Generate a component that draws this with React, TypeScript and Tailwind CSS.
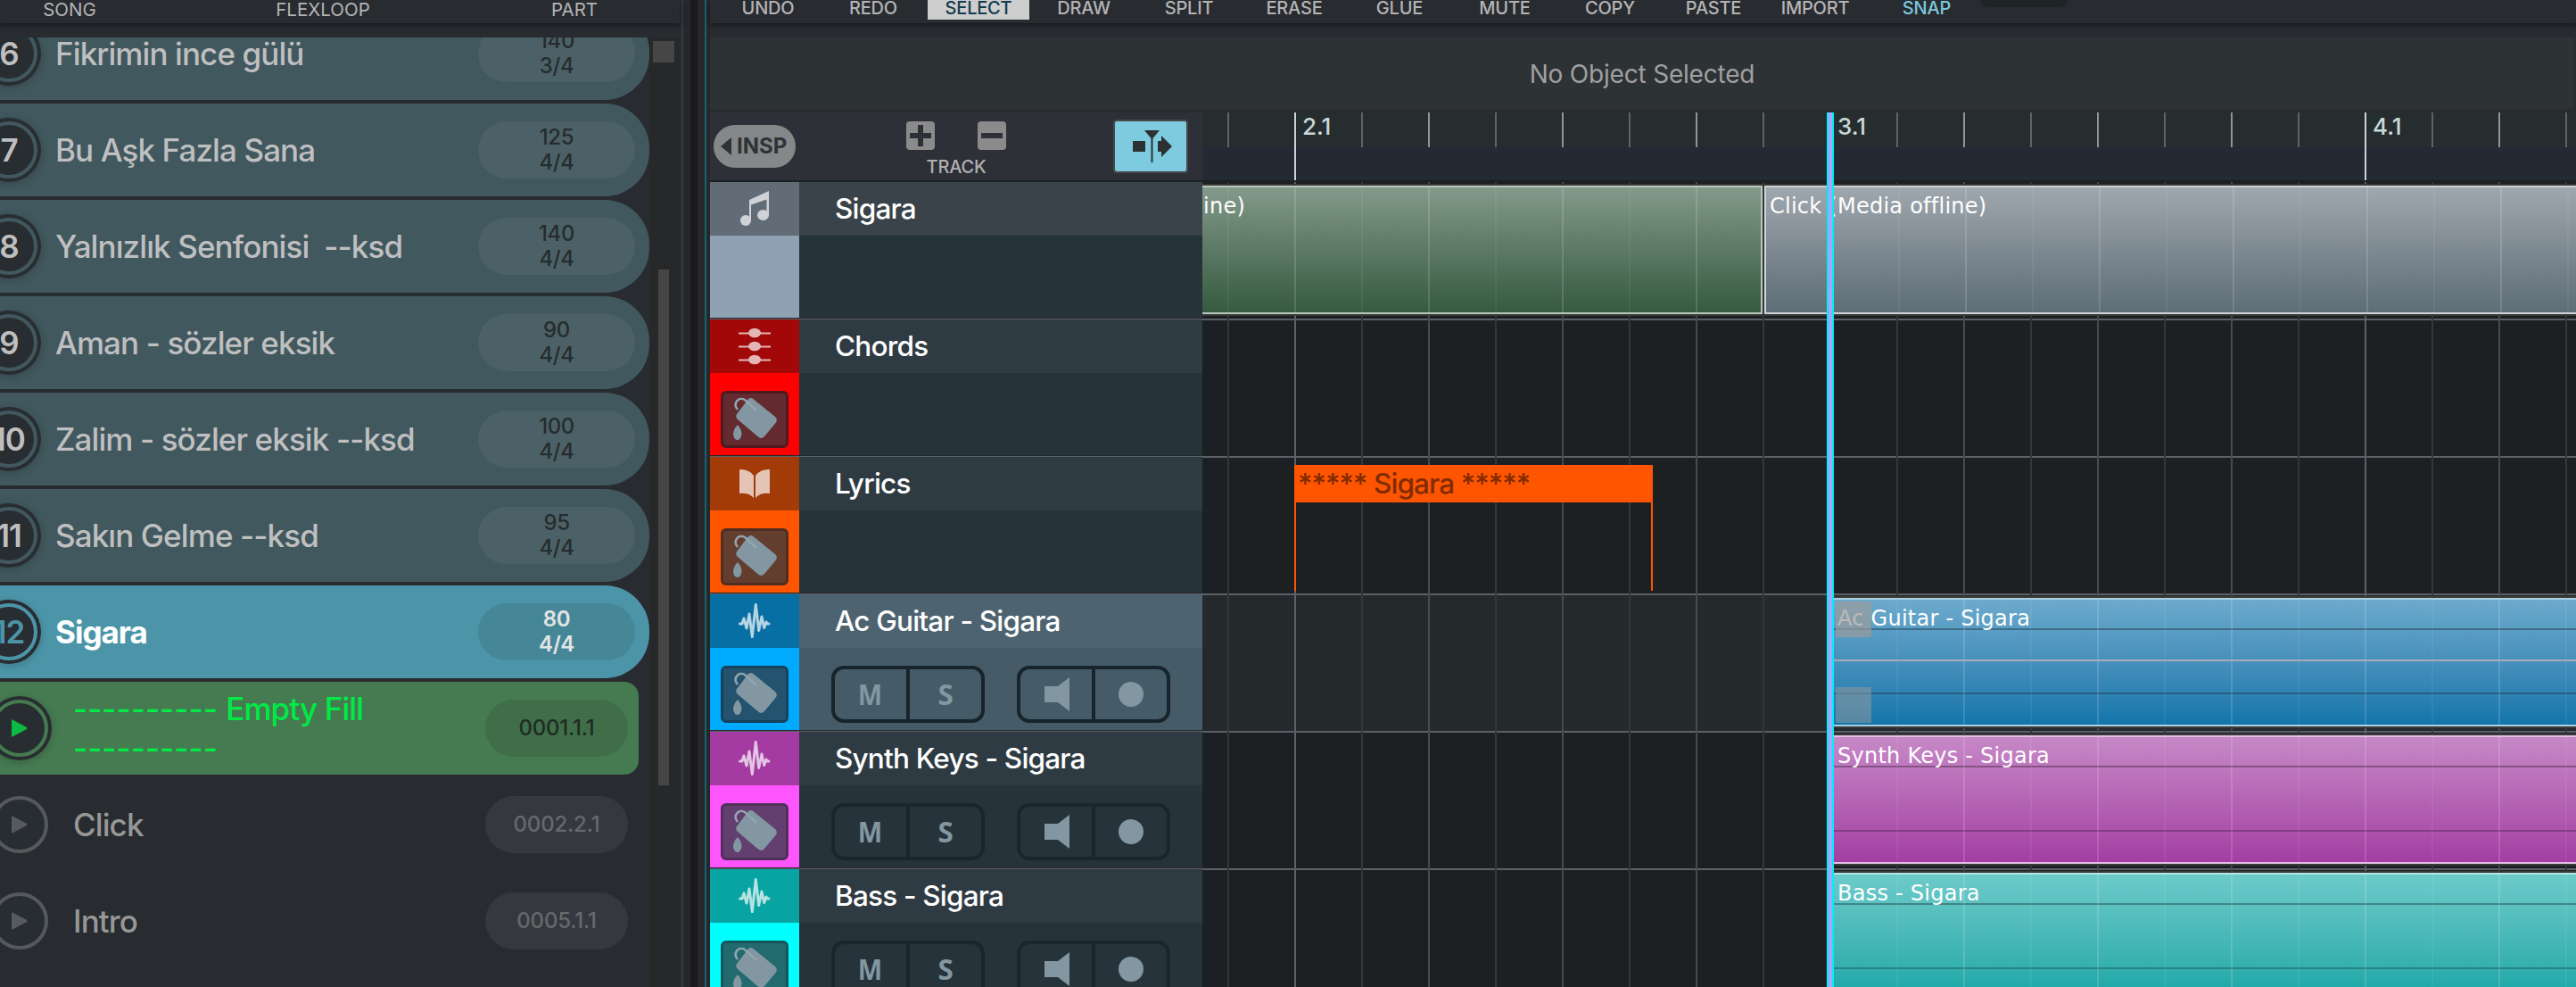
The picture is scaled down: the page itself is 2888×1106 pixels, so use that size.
import clsx from "clsx";

const songs = [
  { no: 6, name: "Fikrimin ince gülü", tempo: 140, sig: "3/4" },
  { no: 7, name: "Bu Aşk Fazla Sana", tempo: 125, sig: "4/4" },
  { no: 8, name: "Yalnızlık Senfonisi  --ksd", tempo: 140, sig: "4/4" },
  { no: 9, name: "Aman - sözler eksik", tempo: 90, sig: "4/4" },
  { no: 10, name: "Zalim - sözler eksik --ksd", tempo: 100, sig: "4/4" },
  { no: 11, name: "Sakın Gelme --ksd", tempo: 95, sig: "4/4" },
  { no: 12, name: "Sigara", tempo: 80, sig: "4/4", active: true },
];

const parts = [
  { name: "Empty Fill", pos: "0001.1.1", active: true },
  { name: "Click", pos: "0002.2.1" },
  { name: "Intro", pos: "0005.1.1" },
];

const tools = ["UNDO", "REDO", "SELECT", "DRAW", "SPLIT", "ERASE", "GLUE", "MUTE", "COPY"];

const tracks = [
  { name: "Sigara", icon: "note", head: "bg-[#616c77]", body: "bg-[#90a1b4]" },
  { name: "Chords", icon: "chords", head: "bg-[#a20808]", body: "bg-[#ff0000]", bucket: "bg-[#632a2f] border-[#4f1a1f]" },
  { name: "Lyrics", icon: "book", head: "bg-[#a33b09]", body: "bg-[#ff5500]", bucket: "bg-[#633e2f] border-[#4f2d20]" },
  { name: "Ac Guitar - Sigara", icon: "wave", head: "bg-[#076fa3]", body: "bg-[#00aaff]", bucket: "bg-[#23536f] border-[#16425a]", audio: true, selected: true },
  { name: "Synth Keys - Sigara", icon: "wave", head: "bg-[#a33ba3]", body: "bg-[#ff55ff]", bucket: "bg-[#633f6f] border-[#50305a]", audio: true },
  { name: "Bass - Sigara", icon: "wave", head: "bg-[#08a3a3]", body: "bg-[#00ffff]", bucket: "bg-[#236a6f] border-[#16555a]", audio: true },
];

// eighth notes across the visible range, bar lines fall on every 8th
const gridLines = Array.from({ length: 21 }, (_, i) => ({
  x: 28 + i * 75,
  kind: (i + 7) % 8 === 0 ? "bar" : i % 2 === 1 ? "beat" : "eighth",
}));

const bars = [
  { label: "2.1", x: 112 },
  { label: "3.1", x: 712 },
  { label: "4.1", x: 1312 },
];

function TrackIcon({ type }: { type: string }) {
  if (type === "note") {
    return (
      <svg width="36" height="42" viewBox="0 0 36 42" className="fill-[#cfd3d7]">
        <path d="M12 11 L34 1 V29 H31.500 V10.500 L14 16.500 V34 H12 Z" />
        <ellipse cx="8" cy="34" rx="6" ry="6" />
        <ellipse cx="27.500" cy="28" rx="6.500" ry="6" />
      </svg>
    );
  }
  if (type === "chords") {
    return (
      <svg width="36" height="42" viewBox="0 0 36 42" className="fill-[#e3b5b5]">
        {[6, 21, 36].map((y) => (
          <g key={y}>
            <rect x="0" y={y - 0.5} width="36" height="2" />
            <ellipse cx="18" cy={y} rx="7" ry="5.200" />
          </g>
        ))}
      </svg>
    );
  }
  if (type === "book") {
    return (
      <svg width="36" height="34" viewBox="0 0 36 34" className="fill-[#e3c4b5]">
        <path d="M1 2 Q1 1 2 1 Q12 1 17 8 V33 Q12 27 1 28 Z" />
        <path d="M35 2 Q35 1 34 1 Q24 1 19 8 V33 Q24 27 35 28 Z" />
      </svg>
    );
  }
  return (
    <svg width="36" height="42" viewBox="0 0 36 42" className="fill-none stroke-white opacity-70">
      <path
        d="M1.500 24 H4 L6 18 L9 29 L12 13 L15.300 38.500 L19.300 2.500 L22.700 31.500 L26 16 L28.700 28.500 L31 22 L32 24 H34"
        strokeWidth="3"
        strokeLinejoin="round"
        strokeLinecap="round"
      />
    </svg>
  );
}

function Bucket({ tone }: { tone: string }) {
  return (
    <div className={clsx("mx-auto mt-5 h-16 w-[76px] rounded-md border-[3px]", tone)}>
      <svg width="70" height="58" viewBox="3 3 70 58">
        <path
          d="M31 9 Q34 7 37 9.500 L61 29 Q64.500 32.500 61.500 36 L49 51 Q45.500 54.500 42 51.500 L19 32 Q16 29 18 26 Z"
          className="fill-[#8297a1]"
        />
        <path d="M19 21 C13 14 20 6 27 10 L40 22" fill="none" strokeWidth="2.500" className="stroke-[#92a6b0]" />
        <path d="M19 38 Q24 44 23.500 49 Q22 55 19 55 Q15 55 14 49 Q14 43 19 38 Z" className="fill-[#8297a1]" />
      </svg>
    </div>
  );
}

function AudioButtons({ selected }: { selected?: boolean }) {
  const border = selected ? "border-[#18242b]" : "border-[#1a262d]";
  const group = clsx(
    "flex h-16 w-[172px] rounded-[14px] border-4 font-['Open_Sans',sans-serif] text-[33px] leading-[58px] font-bold text-[#8297a1]",
    border
  );
  const cell = clsx("flex w-[84px] items-center justify-center border-r-4", border);

  return (
    <div className="flex gap-9 pt-5 pl-9">
      <div className={group}>
        <div className={cell}><span className="scale-x-88">M</span></div>
        <div className="flex w-20 items-center justify-center"><span className="scale-x-95">S</span></div>
      </div>
      <div className={group}>
        <div className={cell}>
          <svg width="28" height="38" viewBox="0 0 28 38" className="ml-0.5 fill-[#8297a1]">
            <path d="M0 10 H15 L28 0 V38 L15 28 H0 Z" />
          </svg>
        </div>
        <div className="flex w-20 items-center justify-center">
          <div className="h-7 w-7 rounded-full bg-[#8297a1]" />
        </div>
      </div>
    </div>
  );
}

function SongList() {
  return (
    <div className="flex w-[762px] shrink-0 flex-col bg-[#282b30]">
      <div className="relative z-10 flex h-[26px] shrink-0 bg-[#282b30] text-[20.5px] leading-[22px] text-[#b4b4b4] shadow-[0_2px_6px_#15171a]">
        <div className="w-[156px] text-center">SONG</div>
        <div className="w-[412px] text-center">FLEXLOOP</div>
        <div className="w-[152px] text-center">PART</div>
      </div>

      <div className="mt-4 flex h-[1064px] overflow-hidden">
        <div className="-mt-[34px] flex w-[728px] flex-col gap-1">
          {songs.map((song) => (
            <div
              key={song.no}
              className={clsx(
                "flex h-[104px] shrink-0 items-center rounded-r-[50px]",
                song.active ? "bg-[#4c95a8] text-white" : "bg-[#41585f] text-[#bfbfbf]"
              )}
            >
              <div className="-ml-[26px] flex h-[72px] w-[72px] shrink-0 items-center justify-center rounded-full bg-[#282d31] shadow-[0_2px_10px_#0003]">
                <div
                  className={clsx(
                    "flex h-16 w-16 shrink-0 items-center justify-center rounded-full border-4 text-[35px] font-semibold tracking-[-1px]",
                    song.active ? "border-[#4c95a8] text-[#4c95a8]" : "border-[#41585f]"
                  )}
                >
                  {song.no}
                </div>
              </div>
              <div
                className={clsx(
                  "grow pl-4 text-[35px] whitespace-pre",
                  song.active ? "font-bold tracking-[-1px]" : "font-[450] tracking-[-0.9px]"
                )}
              >
                {song.name}
              </div>
              <div
                className={clsx(
                  "mr-4 h-16 w-44 rounded-[32px] pt-1 text-center text-[24px] leading-7 tracking-[-0.4px]",
                  song.active ? "bg-[#458797] font-semibold text-[#e4e4e4]" : "bg-[#4b6167] font-[450] text-[#272c2c]"
                )}
              >
                {song.tempo}
                <br />
                {song.sig}
              </div>
            </div>
          ))}

          {parts.map((part) => (
            <div
              key={part.name}
              className={clsx(
                "flex h-[104px] w-[716px] shrink-0 items-center rounded-r-2xl",
                part.active ? "bg-[#467a51] text-[#00ea46]" : "text-[#979797]"
              )}
            >
              <div
                className={clsx(
                  "-ml-[14px] flex h-[72px] w-[72px] shrink-0 items-center justify-center rounded-full",
                  part.active && "bg-[#282d31] shadow-[0_2px_10px_#0003]"
                )}
              >
                <div
                  className={clsx(
                    "flex h-16 w-16 items-center justify-center rounded-full border-4 bg-[#282d31]",
                    part.active ? "border-[#467a51]" : "border-[#55595c]"
                  )}
                >
                  <svg width="18" height="20" viewBox="0 0 18 20" className={part.active ? "fill-[#0bb943]" : "fill-[#585b5e]"}>
                    <path d="M0 1 Q0 0 1 0.500 L17 9 Q18 10 17 11 L1 19.500 Q0 20 0 19 Z" />
                  </svg>
                </div>
              </div>
              <div className="w-[400px] pl-6 text-[35px] leading-[44px] font-[450] tracking-[-0.9px]">
                {part.active && <span className="tracking-normal">{"---------- "}</span>}
                {part.name}
                {part.active && <div className="tracking-normal">----------</div>}
              </div>
              <div
                className={clsx(
                  "mr-3 ml-auto h-16 w-40 rounded-[32px] text-center text-[24px] leading-[64px] font-[450] tracking-[-0.2px]",
                  part.active ? "bg-[#3f6e48] text-[#1f2b22]" : "bg-[#35383e] text-[#66696c]"
                )}
              >
                {part.pos}
              </div>
            </div>
          ))}
        </div>

        <div className="w-[34px] bg-[#27282a] pt-1">
          <div className="ml-1 h-6 w-6 bg-[#464646]" />
          <div className="mt-[232px] ml-2.5 h-[578px] w-3 bg-[#464646]" />
        </div>
      </div>
    </div>
  );
}

function Clip({ x, width, track, label, tone, lines, labelX }: any) {
  return (
    <div
      className="absolute h-[148px] overflow-hidden border-y-2 border-[#3a3b38]"
      style={{ left: x, width, top: track * 154 + 2 }}
    >
      <div className={clsx("relative h-full border-y-2 bg-linear-to-b", tone)}>
        {lines && (
          <>
            <div className="absolute top-[32px] h-0.5 w-full bg-black/30" />
            <div className="absolute top-[104px] h-0.5 w-full bg-black/25" />
          </>
        )}
        {gridLines.map((l) => (
          <div
            key={l.x}
            className={clsx("absolute top-0 h-full w-0.5", l.kind === "eighth" ? "bg-white/5" : "bg-white/14")}
            style={{ left: l.x - x }}
          />
        ))}
        <div
          className="absolute top-[7px] font-['DejaVu_Sans',sans-serif] text-[24px] leading-7 tracking-[0.25px] whitespace-pre text-white"
          style={{ left: labelX }}
        >
          {label}
        </div>
      </div>
    </div>
  );
}

function Timeline() {
  return (
    <div className="relative grow overflow-hidden bg-[#1c2023]">
      <div className="relative h-[78px] border-b-2 border-[#1c2023] bg-[#232a33]">
        <div className="h-[38px] bg-[#262d2f]" />
        {gridLines.map((l) => (
          <div
            key={l.x}
            className={clsx(
              "absolute top-0 w-0.5",
              l.kind === "bar" ? "h-[76px] bg-[#c9d3d5]" : l.kind === "beat" ? "h-[39px] bg-[#8f9596]" : "h-[39px] bg-[#5e6466]"
            )}
            style={{ left: l.x }}
          />
        ))}
        {bars.map((bar) => (
          <div
            key={bar.label}
            className="absolute top-0 text-[26px] leading-8 font-medium text-[#c9d8d8]"
            style={{ left: bar.x }}
          >
            {bar.label}
          </div>
        ))}
      </div>

      <div className="relative h-[902px]">
        {tracks.map((track) => (
          <div
            key={track.name}
            className={clsx("h-[154px] border-y border-[#5d6067] first:border-t-transparent", track.selected && "bg-[#24292c]")}
          />
        ))}
        {gridLines.map((l) => (
          <div
            key={l.x}
            className={clsx(
              "absolute top-0 h-full w-0.5",
              l.kind === "bar" ? "bg-[#5d6067]" : l.kind === "beat" ? "bg-[#484b4e]" : "bg-[#33373a]"
            )}
            style={{ left: l.x }}
          />
        ))}

        <Clip x={-10} width={638} track={0} label="ine)" labelX={11} tone="border-r-2 from-[#839a8a] to-[#365a40] border-[#b9c6bb]" />
        <Clip x={630} width={920} track={0} label="Click (Media offline)" labelX={4} tone="border-l-2 from-[#9fa7ae] to-[#5e6d77] border-[#cdd2d6]" />

        <div className="absolute top-[317px] left-[103px] h-[141px] w-[402px] border-x-2 border-[#ff5500]">
          <div className="h-[42px] bg-[#ff5500] pl-0.5 text-[31.5px] leading-[42px] font-medium tracking-[-0.9px] text-[#802b00]">
            ***** Sigara *****
          </div>
        </div>

        <Clip x={706} width={900} track={3} label="Ac Guitar - Sigara" labelX={6} lines tone="from-[#6caacc] to-[#1075ab] border-[#a9cfe2]" />
        <Clip x={706} width={900} track={4} label="Synth Keys - Sigara" labelX={6} lines tone="from-[#c688c6] to-[#a33ea3] border-[#e3bde3]" />
        <Clip x={706} width={900} track={5} label="Bass - Sigara" labelX={6} lines tone="from-[#6ccaca] to-[#10a6a6] border-[#b5e6e6]" />

        {/* gain line and fade handles of the selected clip */}
        <div className="absolute top-[535px] left-[708px] h-0.5 w-full bg-[#a9adb3]" />
        <div className="absolute top-[470px] left-[710px] h-10 w-10 bg-[#9b9b9b]/70" />
        <div className="absolute top-[566px] left-[710px] h-10 w-10 bg-[#9b9b9b]/50" />
      </div>

      <div className="absolute inset-y-0 left-[700px] w-2 border-x-2 border-[#00eeff] bg-[#a9a4ff]" />
    </div>
  );
}

export default function App() {
  return (
    <div className="flex h-[1106px] w-[2888px] overflow-hidden bg-[#282b30] font-['Inter',sans-serif]">
      <SongList />
      <div className="flex w-[34px] shrink-0">
        <div className="ml-0.5 w-0.5 bg-[#373c44]" />
        <div className="w-2 bg-[#25272a]" />
        <div className="w-2 bg-[#1b1b1c]" />
        <div className="w-2 bg-[#26282b]" />
        <div className="w-0.5 bg-[#17646f]" />
        <div className="w-1 bg-[#25272b]" />
      </div>

      <div className="flex w-[2092px] flex-col">
        <div className="relative z-10 flex h-[26px] shrink-0 bg-[#282b30] pl-[6px] text-center text-[20px] leading-[18px] font-[450] tracking-[-0.2px] text-[#b4b4b4] shadow-[0_2px_6px_#15171a]">
          {tools.map((tool) => (
            <div key={tool} className="w-[118px] px-0.5">
              <div className={clsx("h-[22px]", tool === "SELECT" && "bg-[#cecece] font-medium text-[#123b4d]")}>{tool}</div>
            </div>
          ))}
          <div className="w-[114px]">PASTE</div>
          <div className="w-[114px]">IMPORT</div>
          <div className="w-[136px] text-[#7cc8dc]">SNAP</div>
          <div className="-ml-2 h-2 w-[98px] rounded-b-xl bg-[#1f2426]" />
        </div>

        <div className="mt-4 mr-0.5 h-20 shrink-0 bg-[#2d3235] text-center text-[28px] leading-[82px] tracking-[-0.2px] text-[#a0a0a0]">
          No Object Selected
        </div>

        <div className="mt-1 flex h-[980px]">
          <div className="w-[552px] shrink-0">
            <div className="flex h-[78px] border-b-2 border-[#1c2023] bg-[#2e3038]">
              <div className="mt-3.5 ml-1 flex h-12 w-[92px] items-center rounded-full bg-[#858789] pl-2 text-[24px] font-bold text-[#2e3336]">
                <svg width="12" height="20" viewBox="0 0 12 20" className="mr-1.5 fill-[#2e3336]">
                  <path d="M0 10 L12 0 V20 Z" />
                </svg>
                <span>INSP</span>
              </div>
              <div className="ml-[124px] w-[112px] pt-2.5 text-center text-[20px] text-[#b0b0b0]">
                <div className="flex justify-between">
                  <svg width="32" height="32" viewBox="0 0 32 32">
                    <rect width="32" height="32" rx="4" className="fill-[#8b8b8b]" />
                    <path d="M4 13 H13 V4 H19 V13 H28 V19 H19 V28 H13 V19 H4 Z" className="fill-[#2e3038]" />
                  </svg>
                  <svg width="32" height="32" viewBox="0 0 32 32">
                    <rect width="32" height="32" rx="4" className="fill-[#8b8b8b]" />
                    <rect x="4" y="13" width="24" height="6" className="fill-[#2e3038]" />
                  </svg>
                </div>
                <div className="leading-[38px] font-[450] tracking-[-0.2px]">TRACK</div>
              </div>
              <div className="mt-2 ml-[120px] h-[60px] w-[84px] rounded border-2 border-[#464a4c] bg-[#7ecadf]">
                <svg width="80" height="56" viewBox="0 0 80 56" className="fill-[#2b3134]">
                  <rect x="20" y="22" width="14" height="12" />
                  <path d="M33 10 H50 L42.500 19 V46 H40.500 V19 Z" />
                  <path d="M48 22 H52 V16 L64 28 L52 40 V34 H48 Z" />
                </svg>
              </div>
            </div>

            {tracks.map((track, i) => (
              <div key={track.name} className="h-[154px]">
                <div className="flex h-[152px]">
                  <div className={clsx("w-[100px]", track.body)}>
                    <div className={clsx("flex h-[60px] items-center justify-center", track.head)}>
                      <TrackIcon type={track.icon} />
                    </div>
                    {track.bucket && <Bucket tone={track.bucket} />}
                  </div>
                  <div className={clsx("grow", track.selected ? "bg-[#455c68]" : "bg-[#26333b]")}>
                    <div
                      className={clsx(
                        "h-[60px] pl-10 text-[31.5px] leading-[60px] font-medium tracking-[-0.8px] text-white",
                        track.selected ? "bg-[#4d636f]" : i === 0 ? "bg-[#394349]" : "bg-[#2f3b43]"
                      )}
                    >
                      {track.name}
                    </div>
                    {track.audio && <AudioButtons selected={track.selected} />}
                  </div>
                </div>
                <div className="h-px bg-[#25272b]" />
                <div className="h-px bg-[#5d6067]" />
              </div>
            ))}
          </div>

          <Timeline />
        </div>
      </div>
    </div>
  );
}
